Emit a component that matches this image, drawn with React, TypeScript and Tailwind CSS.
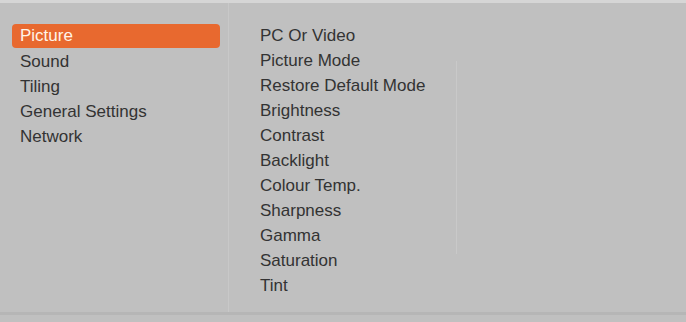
const mainMenu = ["Picture", "Sound", "Tiling", "General Settings", "Network"];

const pictureMenu = [
  "PC Or Video",
  "Picture Mode",
  "Restore Default Mode",
  "Brightness",
  "Contrast",
  "Backlight",
  "Colour Temp.",
  "Sharpness",
  "Gamma",
  "Saturation",
  "Tint",
];

export default function App() {
  return (
    <div
      className="w-[686px] h-[322px] bg-[#c0c0c0] border-t-[3px] border-[#d6d6d6] overflow-hidden text-[17px] text-[#333333]"
      style={{ fontFamily: '"Liberation Sans", Arial, sans-serif' }}
    >
      <div className="flex h-[312px] border-b-[3px] border-[#b6b6b6]">
        {/* Main menu */}
        <div className="w-[228px] pt-[21px] pl-[12px] pr-[8px]">
          {mainMenu.map((item, i) => (
            <div
              key={item}
              className={
                i === 0
                  ? "h-[24px] mb-px flex items-center pl-[8px] rounded-[4px] bg-[#e8692f] text-[#fff4e8]"
                  : "h-[25px] flex items-center pl-[8px]"
              }
            >
              {item}
            </div>
          ))}
        </div>

        {/* Sub menu */}
        <div className="w-[228px] pt-[20px] pl-[31px] border-l border-[#c8c8c8]">
          {pictureMenu.map((item) => (
            <div key={item} className="h-[25px] flex items-center">
              {item}
            </div>
          ))}
        </div>

        {/* Value column */}
        <div className="flex-1 border-l border-[#c9c9c9] my-[58px]" />
      </div>
    </div>
  );
}
